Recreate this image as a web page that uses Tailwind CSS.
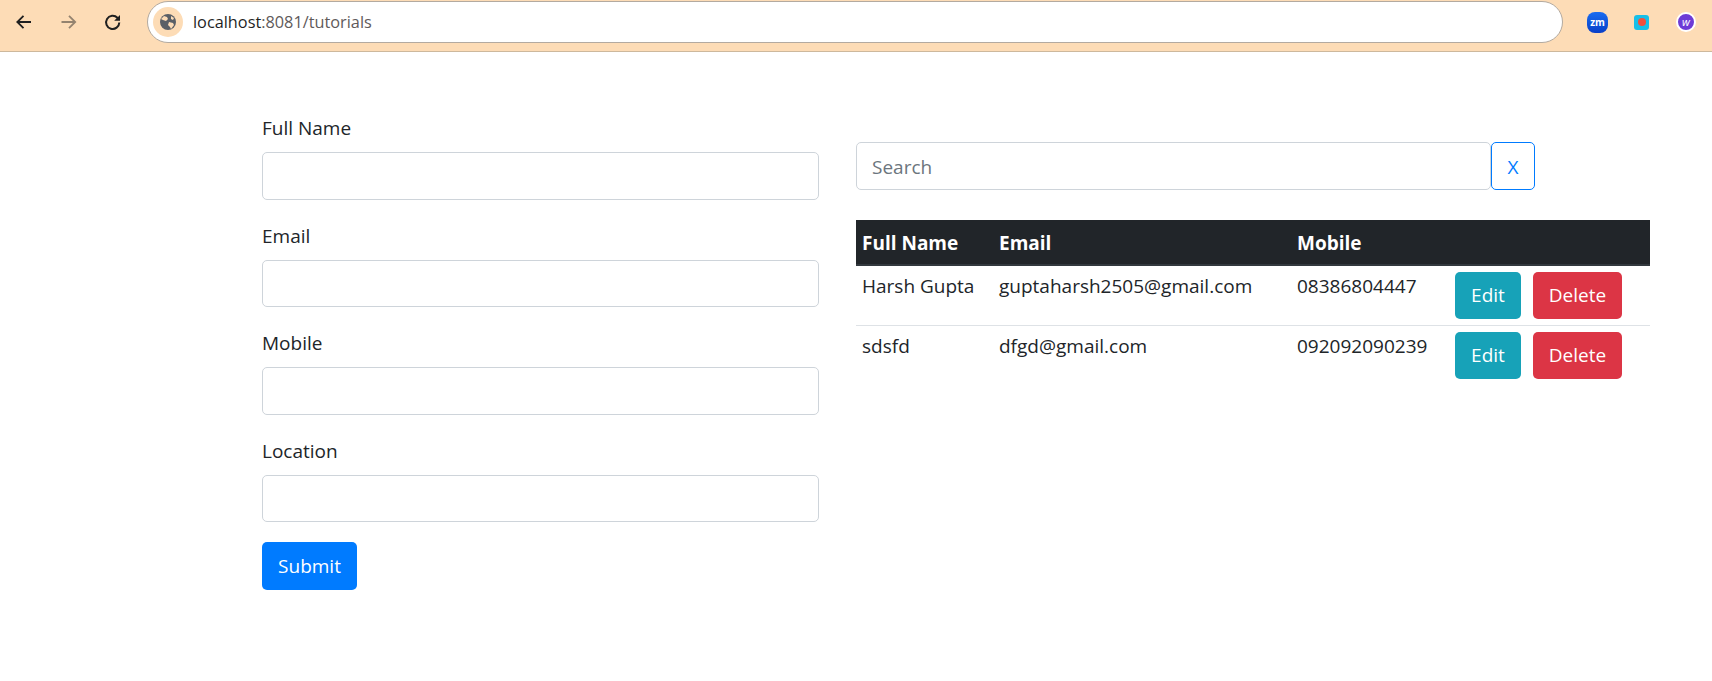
<!DOCTYPE html>
<html><head><meta charset="utf-8"><script src="https://cdn.jsdelivr.net/npm/@tailwindcss/browser@4"></script></head>
<body class="bg-white font-['Open_Sans',sans-serif] text-[#212529] overflow-hidden">
<div class="h-[681px] w-[1712px] flex flex-col">
<header class="h-[52px] shrink-0 bg-[#fddcb6] border-b border-[#cdb89c] flex items-center">
  <svg class="ml-[14px] -mt-[8px] w-[20px] h-[20px]" viewBox="0 0 20 20" fill="none" stroke="#1f1f1f" stroke-width="1.8"><path d="M17 10H3.5M9.5 3.8L3.3 10l6.2 6.2"/></svg>
  <svg class="ml-[25px] -mt-[8px] w-[20px] h-[20px]" viewBox="0 0 20 20" fill="none" stroke="#94836f" stroke-width="1.8"><path d="M2.5 10h13.5M10 3.8l6.2 6.2-6.2 6.2"/></svg>
  <svg class="ml-[24px] -mt-[8px] w-[20px] h-[20px]" viewBox="0 0 20 20" fill="none" stroke="#1f1f1f" stroke-width="2"><path d="M16.3 10.5A6.6 6.6 0 1 1 14.4 5.7L16 7.4"/><path d="M17 3v5.8h-5.8z" stroke="none" fill="#1f1f1f"/></svg>
  <div class="ml-[24px] w-[1416px] h-[42px] -mt-[7px] bg-white rounded-full border border-[#b3aaa0] flex items-center pl-[5px]">
    <div class="w-[30px] h-[30px] rounded-full bg-[#fddcb6] flex items-center justify-center">
      <svg class="w-[18px] h-[18px]" viewBox="0 0 18 18"><circle cx="9" cy="9" r="8" fill="#5a5f66"/><path d="M5 3l3 1 1 2-2 2-3-1-2-1zM10 9l4 1 1 2-3 4-1-2-2-2zM12 3l3 2-1 2-2-1z" fill="#fddcb6"/></svg>
    </div>
    <span class="ml-[10px] text-[16.3px] text-[#1f1f1f]">localhost<span class="text-[#5f5a5a]">:8081/tutorials</span></span>
  </div>
  <div class="ml-[24px] w-[21px] h-[21px] -mt-[7px] rounded-[8px] bg-linear-to-b from-[#1a6cf0] to-[#0a3fc8] text-white text-[10px] font-bold flex items-center justify-center">zm</div>
  <div class="ml-[26px] w-[15px] h-[15px] -mt-[7px] rounded-[3px] bg-[#16bfe8] flex items-center justify-center"><div class="w-[8px] h-[8px] rounded-full bg-[#f2503c]"></div></div>
  <div class="ml-[27px] w-[20px] h-[20px] -mt-[7px] rounded-full bg-[#6d3bd6] border-2 border-white text-white text-[11px] italic flex items-center justify-center">w</div>
</header>
<main class="flex items-start pl-[262px]">
  <form class="w-[557px] mt-[62px] flex flex-col text-[19px]">
    <label class="h-[38px] leading-[28px]">Full Name</label>
    <input class="h-[48px] border border-[#ced4da] rounded-[5px] mb-[23px]">
    <label class="h-[37px] leading-[26px]">Email</label>
    <input class="h-[47px] border border-[#ced4da] rounded-[5px] mb-[23px]">
    <label class="h-[37px] leading-[26px]">Mobile</label>
    <input class="h-[48px] border border-[#ced4da] rounded-[5px] mb-[23px]">
    <label class="h-[37px] leading-[26px]">Location</label>
    <input class="h-[47px] border border-[#ced4da] rounded-[5px] mb-[20px]">
    <button type="button" class="w-[95px] h-[48px] bg-[#007bff] text-white rounded-[5px]">Submit</button>
  </form>
  <section class="ml-[37px] w-[794px] mt-[90px] text-[19px]">
    <div class="flex">
      <input placeholder="Search" class="w-[635px] h-[48px] border border-[#ced4da] rounded-[5px] px-[15px] pt-[2px] placeholder:text-[#6c757d]">
      <button type="button" class="w-[44px] h-[48px] pt-[2px] border border-[#007bff] text-[#007bff] rounded-[5px]">X</button>
    </div>
    <table class="mt-[30px] w-[794px] border-collapse table-fixed">
      <thead><tr class="bg-[#212529] text-white h-[45px] border-b-2 border-[#32383e]">
        <th class="w-[137px] text-left pl-[6px] pt-[3px] font-bold">Full Name</th>
        <th class="w-[298px] text-left pl-[6px] pt-[3px] font-bold">Email</th>
        <th class="w-[158px] text-left pl-[6px] pt-[3px] font-bold">Mobile</th>
        <th></th>
      </tr></thead>
      <tbody>
        <tr class="border-b border-[#dee2e6] h-[60px]">
          <td class="align-top pl-[6px] pt-[6px]">Harsh Gupta</td>
          <td class="align-top pl-[6px] pt-[6px]">guptaharsh2505@gmail.com</td>
          <td class="align-top pl-[6px] pt-[6px]">08386804447</td>
          <td class="align-top pl-[6px] pt-[6px]"><div class="flex gap-[12px]"><button type="button" class="w-[66px] h-[47px] bg-[#17a2b8] text-white rounded-[5px]">Edit</button><button type="button" class="w-[89px] h-[47px] bg-[#dc3545] text-white rounded-[5px]">Delete</button></div></td>
        </tr>
        <tr class="h-[60px]">
          <td class="align-top pl-[6px] pt-[6px]">sdsfd</td>
          <td class="align-top pl-[6px] pt-[6px]">dfgd@gmail.com</td>
          <td class="align-top pl-[6px] pt-[6px]">092092090239</td>
          <td class="align-top pl-[6px] pt-[6px]"><div class="flex gap-[12px]"><button type="button" class="w-[66px] h-[47px] bg-[#17a2b8] text-white rounded-[5px]">Edit</button><button type="button" class="w-[89px] h-[47px] bg-[#dc3545] text-white rounded-[5px]">Delete</button></div></td>
        </tr>
      </tbody>
    </table>
  </section>
</main>
</div>
</body></html>
